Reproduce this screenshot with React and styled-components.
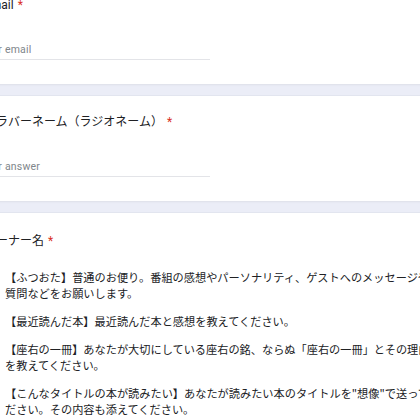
import React from "react";
import styled, { createGlobalStyle } from "styled-components";

const GlobalStyle = createGlobalStyle`
  html, body {
    margin: 0;
    padding: 0;
    background: #ebedf7;
    overflow: hidden;
  }
`;

// the form is scrolled, so the first card starts above the window
const Page = styled.div`
  display: flex;
  flex-direction: column;
  gap: 12px;
  width: 500px;
  margin: -21px 0 0 -32px;
  font-family: Roboto, "Noto Sans CJK JP", sans-serif;
  color: #202124;
`;

const Card = styled.section`
  background: #ffffff;
  border-radius: 8px;
  padding: ${(props) => (props.$top ? props.$top : 18)}px 24px 24px 16px;
  box-shadow: 0 1px 2px rgba(60, 64, 67, 0.08), 0 -1px 0 rgba(60, 64, 67, 0.04);
`;

const Title = styled.div`
  font-size: 12px;
  line-height: 16px;
  white-space: nowrap;
`;

const Required = styled.span`
  color: #d93025;
  padding-left: 1px;
`;

const ShortAnswer = styled.input`
  display: block;
  box-sizing: border-box;
  width: 230px;
  height: 18px;
  margin: 29px 0 0 -4px;
  padding: 0 0 3px;
  border: none;
  border-bottom: 1px solid #e3e4e8;
  background: transparent;
  font-family: Roboto, sans-serif;
  font-size: 10.5px;
  line-height: 14px;
  letter-spacing: 0.2px;
  color: #202124;
  outline: none;

  &::placeholder {
    color: #80868b;
  }
`;

const Options = styled.div`
  display: flex;
  flex-direction: column;
  gap: 12px;
  margin-top: 20px;
`;

const Option = styled.label`
  display: flex;
  align-items: flex-start;
  gap: 7px;
`;

const Radio = styled.span`
  flex: 0 0 auto;
  width: 14px;
  height: 14px;
  box-sizing: border-box;
  border: 2px solid #5f6368;
  border-radius: 50%;
  margin-top: 1px;
`;

const OptionText = styled.span`
  flex: 0 0 435px;
  font-family: "Noto Sans CJK JP", sans-serif;
  font-size: 11.2px;
  line-height: 16px;
  color: #202124;
`;

const corners = [
  "【ふつおた】普通のお便り。番組の感想やパーソナリティ、ゲストへのメッセージや質問などをお願いします。",
  "【最近読んだ本】最近読んだ本と感想を教えてください。",
  "【座右の一冊】あなたが大切にしている座右の銘、ならぬ「座右の一冊」とその理由を教えてください。",
  "【こんなタイトルの本が読みたい】あなたが読みたい本のタイトルを\"想像\"で送ってください。その内容も添えてください。",
  "【その他】上記以外のお便りはこちらへどうぞ。",
];

function App() {
  return (
    <>
      <GlobalStyle />
      <Page>
        <Card>
          <Title>
            Email <Required>*</Required>
          </Title>
          <ShortAnswer type="email" placeholder="Your email" />
        </Card>
        <Card>
          <Title>
            本ラバーネーム（ラジオネーム） <Required>*</Required>
          </Title>
          <ShortAnswer type="text" placeholder="Your answer" />
        </Card>
        <Card $top={20}>
          <Title>
            コーナー名 <Required>*</Required>
          </Title>
          <Options>
            {corners.map((text) => (
              <Option key={text}>
                <Radio />
                <OptionText>{text}</OptionText>
              </Option>
            ))}
          </Options>
        </Card>
      </Page>
    </>
  );
}

export default App;
